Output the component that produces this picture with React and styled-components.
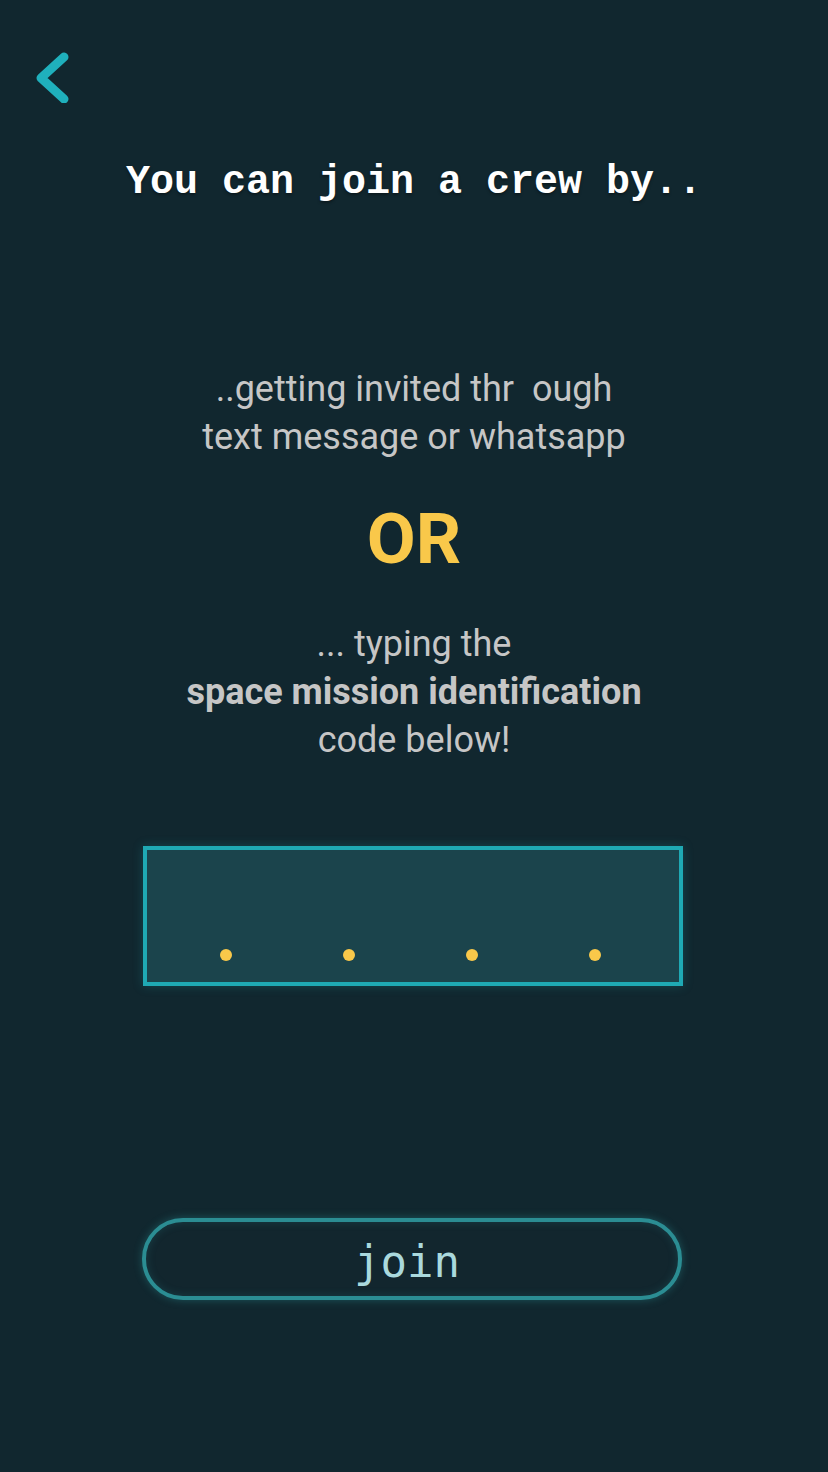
import styled, { createGlobalStyle } from "styled-components";

const GlobalStyle = createGlobalStyle`
  html, body {
    margin: 0;
    padding: 0;
    background: #11272f;
  }
  * {
    box-sizing: border-box;
  }
`;

const Page = styled.div`
  width: 828px;
  min-height: 1472px;
  background: #11272f;
  display: flex;
  flex-direction: column;
  align-items: center;
  font-family: Roboto, "Noto Sans", sans-serif;
`;

const TopBar = styled.div`
  align-self: stretch;
  height: 50px;
  margin-top: 52px;
  padding-left: 32px;
  display: flex;
  align-items: center;
`;

const BackButton = styled.button`
  border: none;
  background: none;
  padding: 0;
  width: 40px;
  height: 50px;
  cursor: pointer;
  display: flex;
  align-items: center;
`;

const Title = styled.h1`
  margin: 57px 0 0;
  font-family: "Liberation Mono", "DejaVu Sans Mono", monospace;
  font-weight: 700;
  font-size: 40px;
  line-height: 48px;
  color: #ffffff;
  text-shadow: 0 2px 3px rgba(0, 0, 0, 0.35);
`;

const Text = styled.p`
  margin: ${(p) => p.$top || 0}px 0 0;
  font-size: 36px;
  line-height: 48px;
  color: #c6c6c6;
  text-align: center;
  white-space: pre;
  b {
    font-weight: 700;
  }
`;

const Or = styled.div`
  margin-top: 38px;
  font-size: 71px;
  font-weight: 700;
  line-height: 80px;
  color: #f9c84a;
`;

const CodeBox = styled.div`
  margin-top: 82px;
  margin-left: -2px;
  width: 540px;
  height: 140px;
  background: #1b444c;
  border: 4px solid #1fa9b4;
  box-shadow: 0 0 10px rgba(31, 169, 180, 0.25);
  display: flex;
  justify-content: center;
  align-items: flex-end;
  gap: 111px;
  padding: 0 6px 21px 0;
`;

const Dot = styled.span`
  width: 12px;
  height: 12px;
  border-radius: 50%;
  background: #f9c84a;
`;

const JoinButton = styled.button`
  margin-top: 232px;
  margin-left: -4px;
  width: 540px;
  height: 82px;
  border-radius: 41px;
  border: 4px solid #2b8d93;
  background: #12262e;
  box-shadow: 0 0 8px rgba(43, 141, 147, 0.45), inset 0 0 8px rgba(43, 141, 147, 0.25);
  color: #aad9dd;
  font-family: "DejaVu Sans Mono", monospace;
  font-weight: 400;
  font-size: 44px;
  display: flex;
  align-items: center;
  justify-content: center;
  padding: 4px 10px 0 0;
  cursor: pointer;
`;

const ChevronLeft = () => (
  <svg width="40" height="52" viewBox="0 0 40 52">
    <path
      d="M32 6 L9 27 L32 48"
      fill="none"
      stroke="#1fb0bc"
      strokeWidth="9"
      strokeLinecap="round"
      strokeLinejoin="round"
    />
  </svg>
);

export default function App() {
  return (
    <>
      <GlobalStyle />
      <Page>
        <TopBar>
          <BackButton aria-label="back">
            <ChevronLeft />
          </BackButton>
        </TopBar>
        <Title>You can join a crew by..</Title>
        <Text $top={158}>
          {"..getting invited thr  ough\ntext message or whatsapp"}
        </Text>
        <Or>OR</Or>
        <Text $top={41}>
          ... typing the
          <br />
          <b>space mission identification</b>
          <br />
          code below!
        </Text>
        <CodeBox>
          <Dot />
          <Dot />
          <Dot />
          <Dot />
        </CodeBox>
        <JoinButton>join</JoinButton>
      </Page>
    </>
  );
}
